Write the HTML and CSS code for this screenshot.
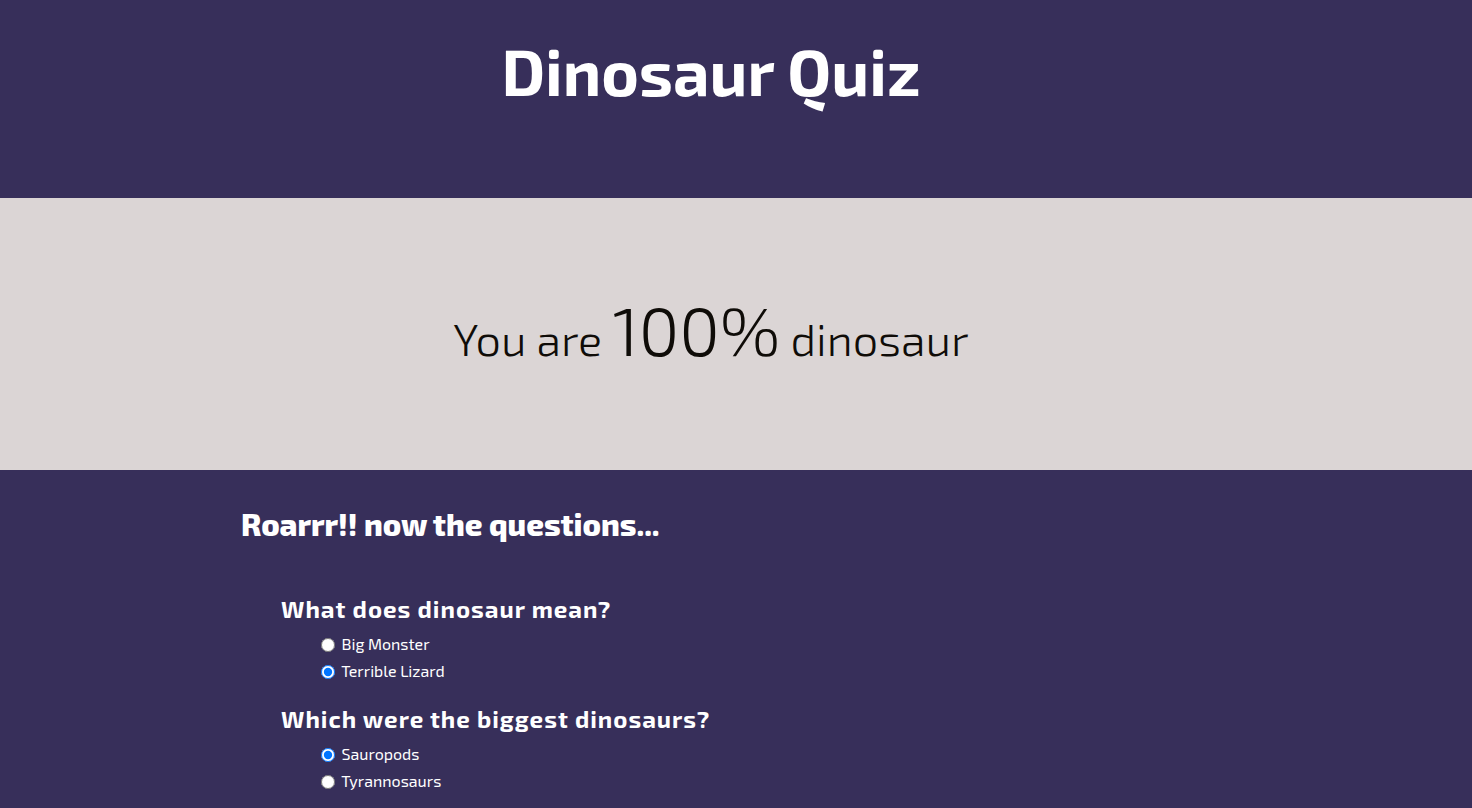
FILE: index.html
```html
<!DOCTYPE html>
<html lang="en">
<head>
<meta charset="utf-8">
<title>Dinosaur Quiz</title>
<link rel="stylesheet" href="styles.css">
</head>
<body>
<header class="site-header">
  <h1 class="title">Dinosaur Quiz</h1>
</header>
<section class="result">
  <p class="result-text">You are <span class="score">100%</span> dinosaur</p>
</section>
<main class="quiz">
  <div class="container">
    <h2 class="intro">Roarrr!! now the questions...</h2>
    <div class="question">
      <h3 class="q-title">What does dinosaur mean?</h3>
      <ul class="options">
        <li><label><input type="radio" name="q1"> Big Monster</label></li>
        <li><label><input type="radio" name="q1" checked> Terrible Lizard</label></li>
      </ul>
    </div>
    <div class="question">
      <h3 class="q-title">Which were the biggest dinosaurs?</h3>
      <ul class="options">
        <li><label><input type="radio" name="q2" checked> Sauropods</label></li>
        <li><label><input type="radio" name="q2"> Tyrannosaurs</label></li>
      </ul>
    </div>
  </div>
</main>
</body>
</html>
```
FILE: styles.css
```css
html, body {
  margin: 0;
  padding: 0;
}
body {
  font-family: "Exo 2", "Open Sans", "DejaVu Sans", sans-serif;
  background: #372f5a;
  color: #ffffff;
}
.site-header {
  height: 198px;
  box-sizing: border-box;
  padding: 31px 50px 0 0;
  text-align: center;
  background: #372f5a;
}
.title {
  margin: 0;
  font-size: 64px;
  font-weight: 700;
  line-height: 80px;
  color: #ffffff;
}
.result {
  height: 272px;
  box-sizing: border-box;
  padding-right: 50px;
  background: #dbd5d5;
  display: flex;
  align-items: center;
  justify-content: center;
}
.result-text {
  margin: 0;
  font-size: 45px;
  font-weight: 300;
  color: #0f0c08;
  line-height: 80px;
  margin-top: -2px;
}
.score {
  font-size: 68px;
}
.quiz {
  padding-bottom: 40px;
}
.container {
  width: 990px;
  margin: 0 auto;
}
.intro {
  margin: 0;
  padding-top: 34px;
  font-size: 30.7px;
  font-weight: 800;
  line-height: 40px;
}
.question {
  padding-left: 40px;
}
.intro + .question {
  margin-top: 50px;
}
.question + .question {
  margin-top: 20px;
}
.q-title {
  margin: 0;
  font-size: 24px;
  font-weight: 700;
  letter-spacing: 1px;
  line-height: 30px;
}
.options {
  list-style: none;
  margin: 6px 0 0;
  padding-left: 40px;
}
.options li {
  font-size: 16px;
  line-height: 27px;
}
.options input {
  margin: 0 3px 0 0;
  width: 14px;
  height: 14px;
  vertical-align: -2px;
}
```
